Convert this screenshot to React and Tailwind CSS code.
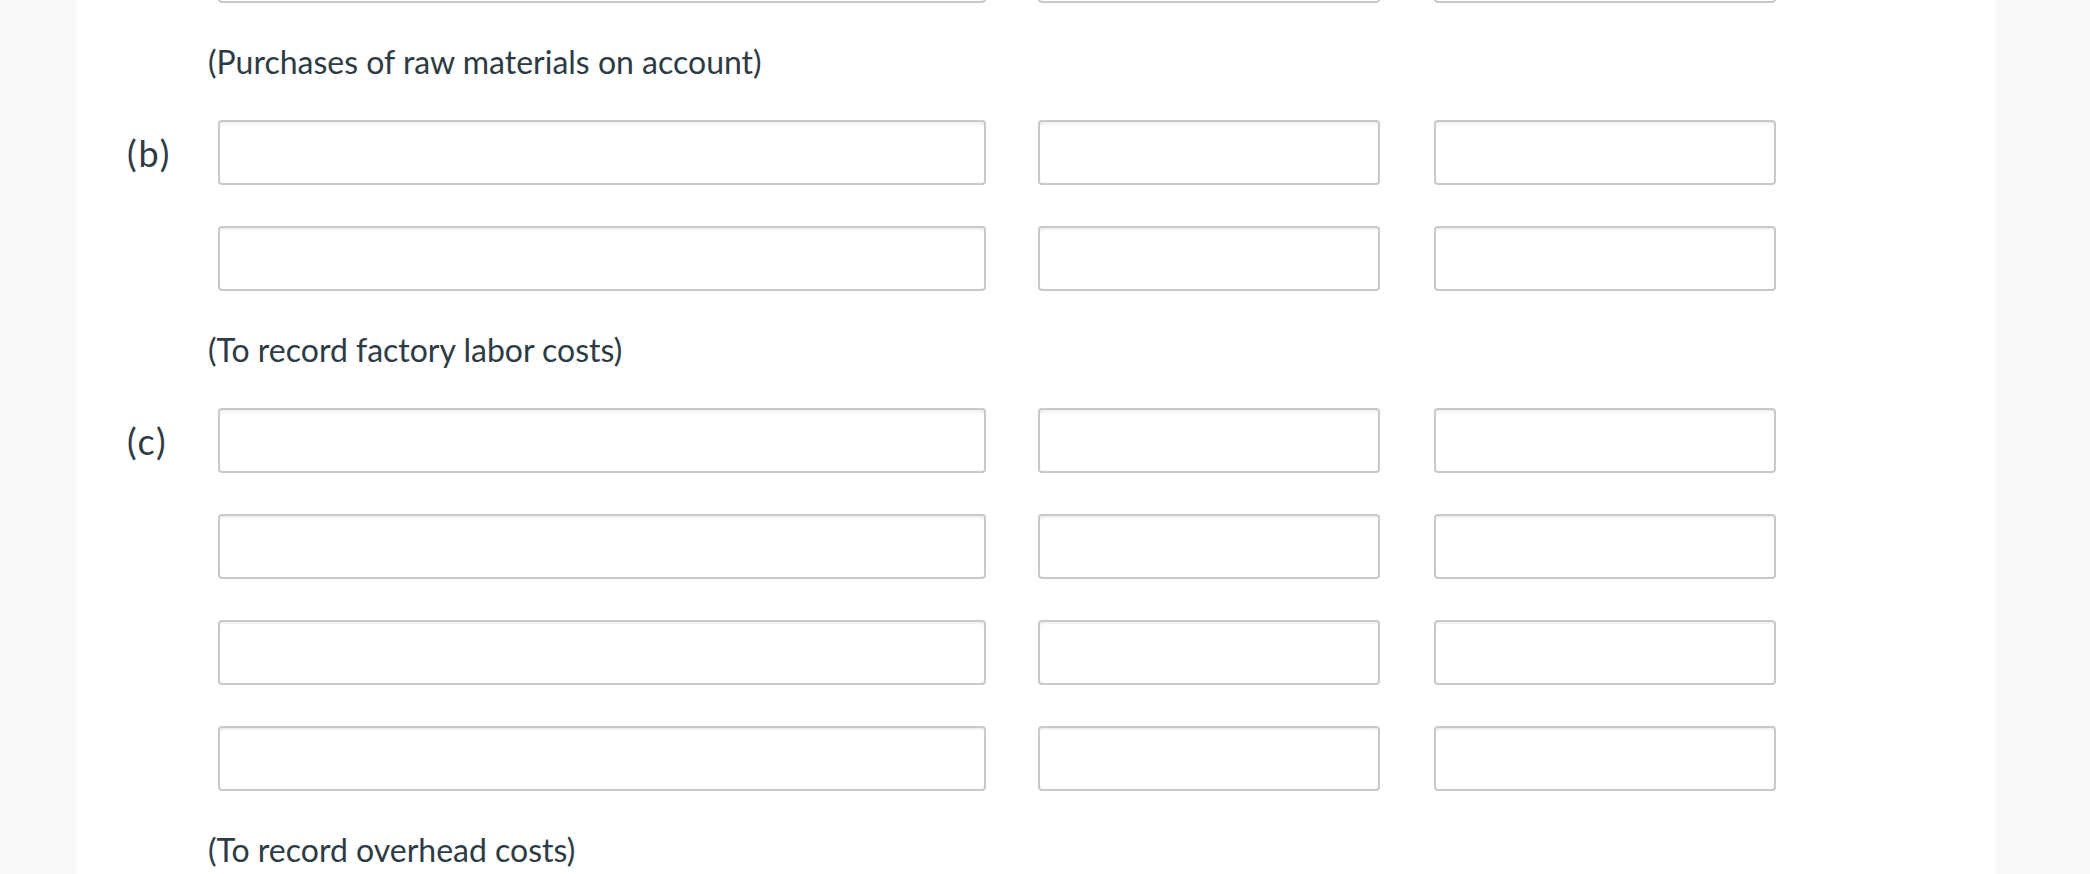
import React from "react";

function Box({ w }) {
  return (
    <div
      className={`${w} h-[65px] shrink-0 rounded-[4px] border-2 border-[#c9c9c9] bg-white shadow-[inset_0_2px_2px_rgba(0,0,0,0.06)]`}
    />
  );
}

function Row({ label, className = "" }) {
  return (
    <div className={`flex items-center ${className}`}>
      <div className="w-[91px] shrink-0 text-[36px] leading-none tracking-[2px] text-[#2d3b45]">{label}</div>
      <Box w="w-[768px]" />
      <div className="w-[52px] shrink-0" />
      <Box w="w-[342px]" />
      <div className="w-[54px] shrink-0" />
      <Box w="w-[342px]" />
    </div>
  );
}

function Desc({ children }) {
  return (
    <div className="flex h-[117px] items-center pl-[81px] text-[32px] leading-none text-[#2d3b45]">
      {children}
    </div>
  );
}

export default function App() {
  return (
    <div
      className="h-[874px] overflow-hidden bg-[#f9f9f9]"
      style={{ fontFamily: "Lato, 'Noto Sans', sans-serif" }}
    >
      <div className="ml-[76px] h-full w-[1920px] overflow-hidden bg-white pl-[51px]">
        <Row className="mt-[-62px]" />
        <Desc>(Purchases of raw materials on account)</Desc>
        <div className="flex flex-col gap-[41px]">
          <Row label="(b)" />
          <Row />
        </div>
        <Desc>(To record factory labor costs)</Desc>
        <div className="flex flex-col gap-[41px]">
          <Row label="(c)" />
          <Row />
          <Row />
          <Row />
        </div>
        <Desc>(To record overhead costs)</Desc>
      </div>
    </div>
  );
}
